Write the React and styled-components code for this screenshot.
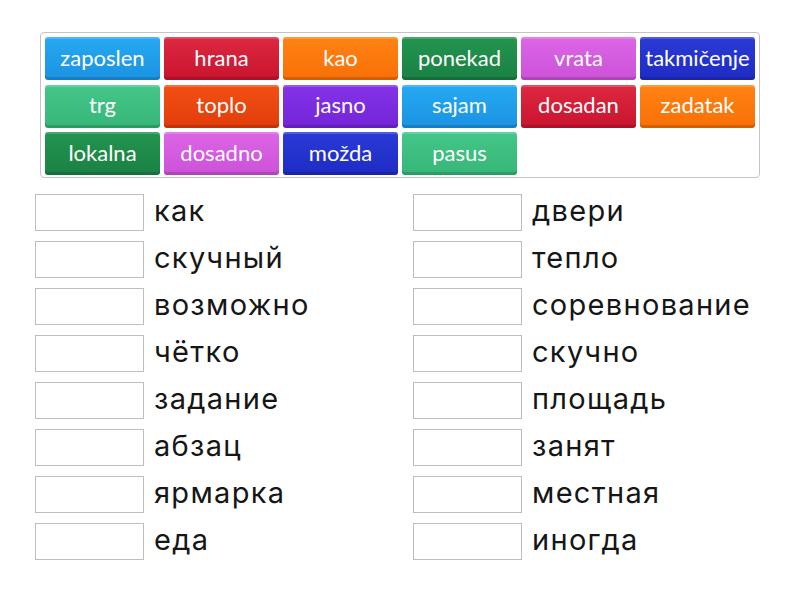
import React from "react"
import styled, {createGlobalStyle} from "styled-components"

const GlobalStyle = createGlobalStyle`
    html, body {
        margin: 0;
        padding: 0;
        background: #ffffff;
    }
    body {
        width: 800px;
        height: 600px;
        overflow: hidden;
    }
`

const Page = styled("div")`
    padding: 32px 40px 0 35px;
`

const Bank = styled("div")`
    margin-left: 5px;
    width: 720px;
    height: 146px;
    box-sizing: border-box;
    border: 1px solid #c4c4c4;
    border-radius: 4px;
    padding: 4px 0 0 4px;
    display: grid;
    grid-template-columns: repeat(6, 115px);
    grid-auto-rows: 43px;
    column-gap: 4px;
    row-gap: 4.5px;
`

const Tile = styled("div")`
    display: flex;
    align-items: center;
    justify-content: center;
    border-radius: 3px;
    background: linear-gradient(${({$c}) => $c[0]}, ${({$c}) => $c[1]});
    box-shadow: inset 0 2px 0 rgba(255,255,255,0.18), inset 0 -3px 0 rgba(0,0,0,0.15);
    color: #ffffff;
    font-family: "Lato", "Open Sans", sans-serif;
    font-size: 22px;
    font-weight: 400;
    padding-bottom: 3px;
    box-sizing: border-box;
    white-space: nowrap;
    overflow: hidden;
`

const Answers = styled("div")`
    margin-top: 16px;
    display: grid;
    grid-template-columns: 378px 378px;
    grid-auto-flow: column;
    grid-template-rows: repeat(8, 36px);
    row-gap: 11px;
`

const Row = styled("div")`
    display: flex;
    align-items: center;
`

const Slot = styled("div")`
    width: 109px;
    height: 37px;
    box-sizing: border-box;
    border: 1px solid #bdbdbd;
    background: #ffffff;
    flex-shrink: 0;
`

const Word = styled("span")`
    margin-left: 10px;
    font-family: "Inter", sans-serif;
    font-size: 29px;
    letter-spacing: 1.3px;
    color: #161616;
    line-height: 1;
    padding-bottom: 3px;
    white-space: nowrap;
`

const colors = {
    blue: ["#26a8f2", "#1b93e2"],
    red: ["#dc2840", "#c9142f"],
    orange: ["#ff8214", "#f87006"],
    dgreen: ["#23944f", "#1a8144"],
    pink: ["#dc66e6", "#cc52d8"],
    dblue: ["#2b3ad6", "#1e2cc4"],
    lgreen: ["#45c68a", "#36b677"],
    ored: ["#f24f14", "#e23d0a"],
    purple: ["#8433e8", "#7425d8"],
}

const tiles = [
    ["zaposlen", "blue"], ["hrana", "red"], ["kao", "orange"], ["ponekad", "dgreen"], ["vrata", "pink"], ["takmičenje", "dblue"],
    ["trg", "lgreen"], ["toplo", "ored"], ["jasno", "purple"], ["sajam", "blue"], ["dosadan", "red"], ["zadatak", "orange"],
    ["lokalna", "dgreen"], ["dosadno", "pink"], ["možda", "dblue"], ["pasus", "lgreen"],
]

const left = ["как", "скучный", "возможно", "чётко", "задание", "абзац", "ярмарка", "еда"]
const right = ["двери", "тепло", "соревнование", "скучно", "площадь", "занят", "местная", "иногда"]

const App = () => {
    return (
        <Page>
            <GlobalStyle/>
            <Bank>
                {tiles.map(([text, c]) => (
                    <Tile key={text} $c={colors[c]}>{text}</Tile>
                ))}
            </Bank>
            <Answers>
                {left.map(w => (
                    <Row key={w}><Slot/><Word>{w}</Word></Row>
                ))}
                {right.map(w => (
                    <Row key={w}><Slot/><Word>{w}</Word></Row>
                ))}
            </Answers>
        </Page>
    )
}

export default App
